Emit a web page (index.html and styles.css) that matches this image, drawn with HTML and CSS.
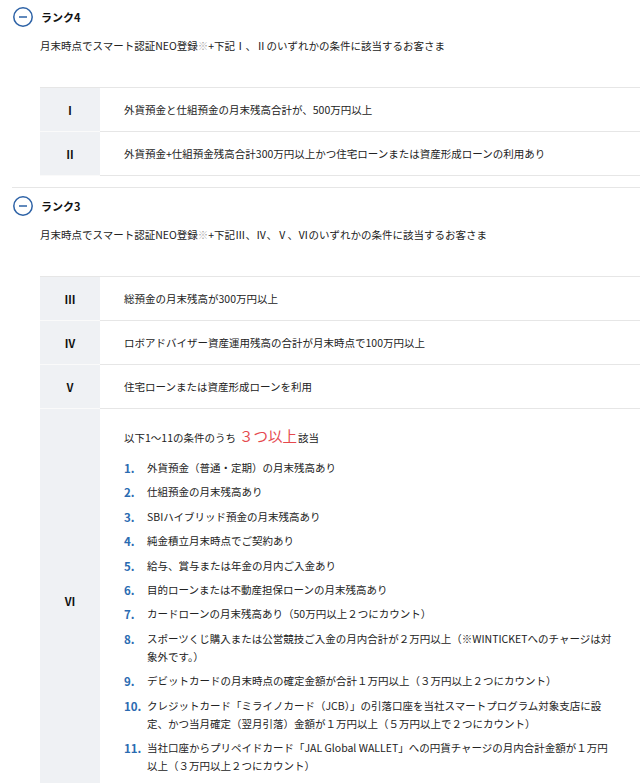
FILE: index.html
```html
<!DOCTYPE html>
<html lang="ja">
<head>
<meta charset="utf-8">
<title>ランク</title>
<link rel="stylesheet" href="styles.css">
</head>
<body>
<section class="rank rank--first">
  <h2 class="rank-head"><span class="toggle"><svg width="20" height="20" viewBox="0 0 20 20"><circle cx="10" cy="10" r="9.2" fill="none" stroke="#2d62a6" stroke-width="1.5"/><line x1="6" y1="10" x2="14" y2="10" stroke="#2d62a6" stroke-width="1.5"/></svg></span>ランク4</h2>
  <p class="rank-desc">月末時点でスマート認証NEO登録<span class="note">※</span>+下記Ⅰ、Ⅱのいずれかの条件に該当するお客さま</p>
  <table class="cond">
    <tr><th>Ⅰ</th><td>外貨預金と仕組預金の月末残高合計が、500万円以上</td></tr>
    <tr><th>Ⅱ</th><td>外貨預金+仕組預金残高合計300万円以上かつ住宅ローンまたは資産形成ローンの利用あり</td></tr>
  </table>
</section>
<section class="rank">
  <h2 class="rank-head"><span class="toggle"><svg width="20" height="20" viewBox="0 0 20 20"><circle cx="10" cy="10" r="9.2" fill="none" stroke="#2d62a6" stroke-width="1.5"/><line x1="6" y1="10" x2="14" y2="10" stroke="#2d62a6" stroke-width="1.5"/></svg></span>ランク3</h2>
  <p class="rank-desc">月末時点でスマート認証NEO登録<span class="note">※</span>+下記Ⅲ、Ⅳ、Ⅴ、Ⅵのいずれかの条件に該当するお客さま</p>
  <table class="cond">
    <tr><th>Ⅲ</th><td>総預金の月末残高が300万円以上</td></tr>
    <tr><th>Ⅳ</th><td>ロボアドバイザー資産運用残高の合計が月末時点で100万円以上</td></tr>
    <tr><th>Ⅴ</th><td>住宅ローンまたは資産形成ローンを利用</td></tr>
    <tr class="row-vi"><th>Ⅵ</th><td class="vi">
      <p class="vi-lead">以下1〜11の条件のうち<span class="big">３つ以上</span>該当</p>
      <ol class="items">
        <li><span class="num">1.</span><span>外貨預金（普通・定期）の月末残高あり</span></li>
        <li><span class="num">2.</span><span>仕組預金の月末残高あり</span></li>
        <li><span class="num">3.</span><span>SBIハイブリッド預金の月末残高あり</span></li>
        <li><span class="num">4.</span><span>純金積立月末時点でご契約あり</span></li>
        <li><span class="num">5.</span><span>給与、賞与または年金の月内ご入金あり</span></li>
        <li><span class="num">6.</span><span>目的ローンまたは不動産担保ローンの月末残高あり</span></li>
        <li><span class="num">7.</span><span>カードローンの月末残高あり（50万円以上２つにカウント）</span></li>
        <li><span class="num">8.</span><span>スポーツくじ購入または公営競技ご入金の月内合計が２万円以上（※WINTICKETへのチャージは対<br>象外です。）</span></li>
        <li><span class="num">9.</span><span>デビットカードの月末時点の確定金額が合計１万円以上（３万円以上２つにカウント）</span></li>
        <li><span class="num">10.</span><span>クレジットカード「ミライノカード（JCB）」の引落口座を当社スマートプログラム対象支店に設<br>定、かつ当月確定（翌月引落）金額が１万円以上（５万円以上で２つにカウント）</span></li>
        <li><span class="num">11.</span><span>当社口座からプリペイドカード「JAL Global WALLET」への円貨チャージの月内合計金額が１万円<br>以上（３万円以上２つにカウント）</span></li>
      </ol>
    </td></tr>
  </table>
</section>
</body>
</html>
```
FILE: styles.css
```css
html, body {
  margin: 0;
  padding: 0;
  background: #fff;
}
body {
  font-family: "Noto Sans CJK JP", "Noto Sans", sans-serif;
  font-size: 10.5px;
  color: #222;
}
.rank {
  margin-left: 12px;
  border-top: 1px solid #e6e6e6;
  padding-top: 8px;
  padding-bottom: 11px;
}
.rank--first {
  border-top: 0;
  padding-top: 7px;
}
.rank-head {
  display: flex;
  align-items: center;
  gap: 8px;
  height: 20px;
  margin: 0;
  padding-left: 1px;
  font-size: 11px;
  font-weight: 700;
  color: #111;
}
.toggle {
  display: flex;
  width: 20px;
  height: 20px;
}
.rank-desc {
  margin: 10px 0 0 28px;
  line-height: 18px;
}
.note {
  color: #aaa;
}
.cond {
  margin: 32px 0 0 28px;
  width: calc(100% - 28px);
  border-collapse: collapse;
}
.cond th {
  width: 60px;
  padding: 0;
  background: #eff1f4;
  font-weight: 700;
  font-size: 11px;
  color: #111;
  text-align: center;
  border-bottom: 1px solid #fafafa;
}
.cond td {
  height: 43px;
  padding: 0 0 0 24px;
  border-bottom: 1px solid #e6e6e6;
  line-height: 18px;
}
.cond tr:first-child th,
.cond tr:first-child td {
  border-top: 1px solid #e6e6e6;
}
.cond td.vi {
  padding: 15px 0 12px 24px;
  vertical-align: top;
}
.vi-lead {
  margin: 0;
  line-height: 24px;
}
.big {
  color: #e5484d;
  font-size: 14.5px;
  margin: 0 1px 0 3px;
}
.items {
  margin: 9px 0 0;
  padding: 0;
  list-style: none;
}
.items li {
  display: grid;
  grid-template-columns: 23px 1fr;
  line-height: 18px;
  margin-bottom: 6.4px;
  white-space: nowrap;
}
.num {
  color: #2a6bb1;
  font-weight: 700;
  font-size: 11.5px;
}
```
